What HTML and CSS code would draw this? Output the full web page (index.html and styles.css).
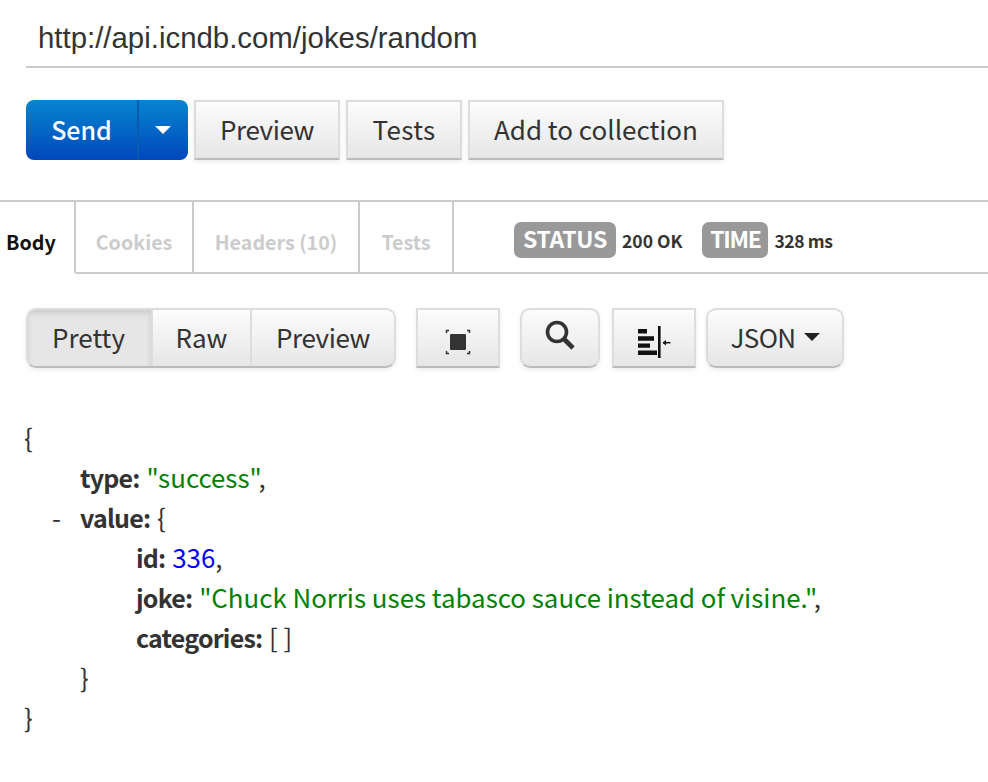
FILE: index.html
```html
<!DOCTYPE html>
<html lang="en">
<head>
<meta charset="utf-8">
<title>Postman response</title>
<link rel="stylesheet" href="styles.css">
</head>
<body>
<div class="url-row"><div class="url">http://api.icndb.com/jokes/random</div></div>
<div class="actions">
  <div class="send">
    <span class="send-main">Send</span>
    <span class="send-caret"><i class="caret caret-white"></i></span>
  </div>
  <button class="btn w-preview"><span class="tight">Preview</span></button>
  <button class="btn w-tests"><span class="wide">Tests</span></button>
  <button class="btn w-add">Add to collection</button>
</div>
<div class="tabs">
  <div class="tab tab-active">Body</div>
  <div class="tab tab-cookies">Cookies</div>
  <div class="tab tab-headers">Headers (10)</div>
  <div class="tab tab-tests">Tests</div>
  <div class="meta">
    <span class="badge badge-status">STATUS</span><span class="meta-val val-status">200 OK</span>
    <span class="badge badge-time">TIME</span><span class="meta-val val-time">328 ms</span>
  </div>
</div>
<div class="toolbar">
  <div class="group">
    <span class="seg seg-on seg-pretty">Pretty</span>
    <span class="seg seg-raw">Raw</span>
    <span class="seg seg-prev"><span class="tight">Preview</span></span>
  </div>
  <button class="btn icon w-full" aria-label="Fullscreen">
    <svg width="26" height="26" viewBox="0 0 26 26"><rect x="5" y="5" width="16" height="16" rx="1" fill="#333"/><path d="M1.500 4V1.500H4M22 1.500h2.500V4M24.500 22v2.500H22M4 24.500H1.500V22" fill="none" stroke="#333" stroke-width="1.500"/></svg>
  </button>
  <button class="btn icon round w-search" aria-label="Search">
    <svg width="30" height="30" viewBox="0 0 30 30"><circle cx="12" cy="12" r="9.500" fill="none" stroke="#333" stroke-width="3.600"/><path d="M19 19l9 9" stroke="#333" stroke-width="4.600" fill="none"/></svg>
  </button>
  <button class="btn icon w-wrap" aria-label="Wrap">
    <svg width="34" height="32" viewBox="0 0 34 32"><path d="M1 3h9v4.500H1zM1 10.300h16v4.500H1zM1 17.500h12v4.200H1zM1 24.500h19V29H1z" fill="#111"/><path d="M22.300 0v32" stroke="#111" stroke-width="2.600"/><path d="M26 16.700h7.500" stroke="#111" stroke-width="1.500"/><path d="M25.500 16.700l3.500-2.800v5.600z" fill="#111"/></svg>
  </button>
  <button class="btn round w-json"><span class="tight-more">JSON</span><i class="caret caret-dark"></i></button>
</div>
<div class="json">
  <div class="line">{</div>
  <div class="line in1"><b>type:</b> <span class="str">"success"</span>,</div>
  <div class="line in1 has-toggle"><span class="toggle">-</span><b>value:</b> {</div>
  <div class="line in2"><b>id:</b> <span class="num">336</span>,</div>
  <div class="line in2"><b>joke:</b> <span class="str">"Chuck Norris uses tabasco sauce instead of visine."</span>,</div>
  <div class="line in2"><b>categories:</b> [ ]</div>
  <div class="line in1">}</div>
  <div class="line">}</div>
</div>
</body>
</html>
```
FILE: styles.css
```css
* { box-sizing: border-box; }
html, body { margin: 0; padding: 0; background: #fff; }
body {
  width: 988px;
  height: 782px;
  overflow: hidden;
  font-family: "Noto Sans CJK SC", "Noto Sans", sans-serif;
  color: #333;
}
.url-row { padding: 0 0 0 26px; height: 68px; }
.url {
  height: 68px;
  border-bottom: 2px solid #ccc;
  padding: 18px 0 0 12px;
  font-family: "Liberation Sans", Arial, sans-serif;
  font-size: 29.4px;
  line-height: 40px;
  color: #333;
}
.actions { display: flex; gap: 6px; margin: 32px 0 0 26px; height: 60px; }
.btn {
  display: flex;
  align-items: center;
  justify-content: center;
  height: 60px;
  padding: 0 0 2px;
  border: 2px solid #ddd;
  border-bottom-color: #bbb;
  border-radius: 0;
  background: linear-gradient(#fcfcfc, #e6e6e6);
  box-shadow: 0 2px 5px rgba(0,0,0,.08);
  font-family: inherit;
  font-size: 26px;
  line-height: 36px;
  color: #333;
}
.tight { letter-spacing: -.4px; }
.tight-more { letter-spacing: -.6px; }
.wide { letter-spacing: .3px; }
.round { border-radius: 10px; }
.send {
  display: flex;
  width: 162px;
  height: 60px;
  border-radius: 8px;
  overflow: hidden;
  background: linear-gradient(#0785d0, #0047bb);
  color: #fff;
  font-size: 25px;
  font-weight: 500;
  line-height: 58px;
}
.send-main { width: 113px; text-align: center; border-right: 2px solid #0a5bb0; }
.send-caret { flex: 1; display: flex; align-items: center; justify-content: center; padding-right: 2px; }
.caret { display: inline-block; width: 0; height: 0; border-style: solid; border-color: transparent; }
.caret-white { border-width: 8px 8px 0; border-top-color: #fff; }
.caret-dark { border-width: 8px 8px 0; border-top-color: #222; margin-left: 8px; }
.w-preview { width: 146px; }
.w-tests { width: 116px; }
.w-add { width: 256px; }
.tabs {
  display: flex;
  margin-top: 40px;
  height: 74px;
  border-top: 2px solid #ccc;
  font-size: 19.700px;
  font-weight: 700;
}
.tab {
  height: 72px;
  line-height: 80px;
  text-align: center;
  color: #ccc;
  border-right: 2px solid #ccc;
  border-bottom: 2px solid #ccc;
}
.tab-active { width: 76px; color: #111; border-bottom-color: transparent; text-align: left; padding-left: 6px; }
.tab-cookies { width: 118px; }
.tab-headers { width: 166px; }
.tab-tests { width: 94px; }
.meta {
  flex: 1;
  display: flex;
  align-items: flex-start;
  height: 72px;
  padding: 20px 0 0 60px;
  border-bottom: 2px solid #ccc;
  font-size: 17.500px;
  color: #333;
}
.badge {
  height: 36px;
  border-radius: 7px;
  background: #999;
  color: #fff;
  font-size: 23px;
  font-weight: 700;
  line-height: 33px;
  text-align: center;
}
.badge-status { width: 102px; letter-spacing: -.3px; }
.badge-time { width: 66px; letter-spacing: -1.300px; }
.meta-val { margin-left: 6px; line-height: 38px; font-weight: 700; }
.val-status { margin-right: 20px; }
.val-time { letter-spacing: -.4px; }
.toolbar { display: flex; margin: 34px 0 0 26px; height: 60px; }
.group {
  display: flex;
  width: 370px;
  height: 60px;
  border: 2px solid #ddd;
  border-bottom-color: #bbb;
  border-radius: 10px;
  overflow: hidden;
  background: linear-gradient(#fcfcfc, #e6e6e6);
  box-shadow: 0 2px 5px rgba(0,0,0,.08);
  font-size: 26px;
  line-height: 54px;
}
.seg { text-align: center; border-right: 2px solid #ddd; }
.seg-prev { border-right: 0; }
.seg-pretty { width: 125px; padding-right: 2px; }
.seg-raw { width: 99px; }
.seg-prev { flex: 1; }
.seg-on { background: #e6e6e6; box-shadow: inset 0 3px 5px rgba(0,0,0,.12); }
.icon svg { display: block; }
.w-full { width: 84px; margin-left: 20px; padding: 8px 0 0; }
.w-search { width: 80px; margin-left: 20px; padding: 0 0 6px; }
.w-wrap { width: 84px; margin-left: 12px; padding: 8px 0 0; }
.w-json { width: 138px; margin-left: 10px; }
.json { margin: 49px 0 0 24px; font-size: 25.850px; line-height: 40px; color: #333; }
.line { height: 40px; white-space: nowrap; }
.line b { font-size: 25px; font-weight: 700; letter-spacing: -.8px; margin-right: 1px; }
.in1 { padding-left: 56px; }
.in2 { padding-left: 112px; }
.has-toggle { position: relative; }
.toggle { position: absolute; left: 28px; top: 0; }
.str { color: #008000; }
.num { color: #0000ff; }
```
